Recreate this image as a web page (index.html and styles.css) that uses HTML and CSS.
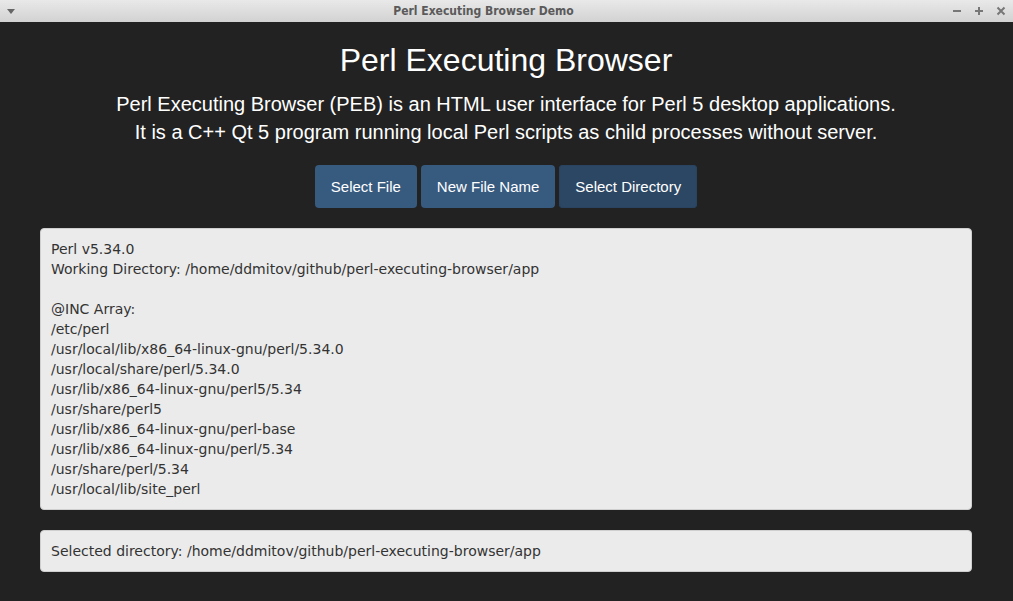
FILE: index.html
```
<!DOCTYPE html>
<html>
<head>
<meta charset="utf-8">
<title>Perl Executing Browser Demo</title>
<link rel="stylesheet" href="styles.css">
</head>
<body>
<div class="titlebar">
  <svg class="tb-menu" width="10" height="8" viewBox="0 0 10 8"><path d="M1 2 L9 2 L5 7 Z" fill="#666"/></svg>
  <div class="tb-title">Perl Executing Browser Demo</div>
  <div class="tb-controls">
    <svg width="12" height="12" viewBox="0 0 12 12"><path d="M2 6 H10" stroke="#777" stroke-width="2"/></svg>
    <svg width="12" height="12" viewBox="0 0 12 12"><path d="M2 6 H10 M6 2 V10" stroke="#777" stroke-width="2"/></svg>
    <svg width="12" height="12" viewBox="0 0 12 12"><path d="M2.5 2.5 L9.5 9.5 M9.5 2.5 L2.5 9.5" stroke="#777" stroke-width="2"/></svg>
  </div>
</div>
<main class="page">
  <h1 class="title">Perl Executing Browser</h1>
  <p class="lead">Perl Executing Browser (PEB) is an HTML user interface for Perl 5 desktop applications.<br>It is a C++ Qt 5 program running local Perl scripts as child processes without server.</p>
  <div class="buttons">
    <button class="btn">Select File</button>
    <button class="btn">New File Name</button>
    <button class="btn btn-active">Select Directory</button>
  </div>
  <div class="well">Perl v5.34.0<br>Working Directory: /home/ddmitov/github/perl-executing-browser/app<br><br>@INC Array:<br>/etc/perl<br>/usr/local/lib/x86_64-linux-gnu/perl/5.34.0<br>/usr/local/share/perl/5.34.0<br>/usr/lib/x86_64-linux-gnu/perl5/5.34<br>/usr/share/perl5<br>/usr/lib/x86_64-linux-gnu/perl-base<br>/usr/lib/x86_64-linux-gnu/perl/5.34<br>/usr/share/perl/5.34<br>/usr/local/lib/site_perl</div>
  <div class="well">Selected directory: /home/ddmitov/github/perl-executing-browser/app</div>
</main>
</body>
</html>
```
FILE: styles.css
```
html, body {
  margin: 0;
  padding: 0;
  background: #222222;
  height: 100%;
  overflow: hidden;
}
.titlebar {
  height: 22px;
  background: linear-gradient(#e9e9e9, #d2d2d2);
  display: flex;
  align-items: center;
}
.tb-menu {
  margin-left: 6px;
}
.tb-title {
  flex: 1;
  text-align: center;
  font-family: "DejaVu Sans Condensed", "DejaVu Sans", sans-serif;
  font-weight: bold;
  font-size: 12px;
  color: #5a5a5a;
}
.tb-controls {
  display: flex;
  gap: 10px;
  margin-right: 6px;
}
.page {
  padding: 0 41px 0 40px;
}
.title {
  margin: 18px 0 0;
  font-family: "Liberation Sans", Arial, sans-serif;
  font-weight: normal;
  font-size: 32px;
  line-height: 40px;
  color: #ffffff;
  text-align: center;
}
.lead {
  margin: 10px 0 0;
  font-family: "Liberation Sans", Arial, sans-serif;
  font-size: 20px;
  line-height: 28px;
  color: #ffffff;
  text-align: center;
}
.buttons {
  display: flex;
  justify-content: center;
  gap: 4px;
  margin-top: 19px;
}
.btn {
  font-family: "Liberation Sans", Arial, sans-serif;
  font-size: 15px;
  line-height: 21px;
  padding: 11px 16px;
  color: #ffffff;
  background: #375a7f;
  border: none;
  border-radius: 4px;
}
.btn-active {
  background: #2b4764;
  box-shadow: inset 0 0 0 1px #294361;
}
.well {
  margin-top: 20px;
  background: #ebebeb;
  border: 1px solid #cfcfcf;
  border-radius: 4px;
  padding: 10px;
  font-family: "DejaVu Sans", sans-serif;
  font-size: 14px;
  line-height: 20px;
  color: #333333;
}
```
